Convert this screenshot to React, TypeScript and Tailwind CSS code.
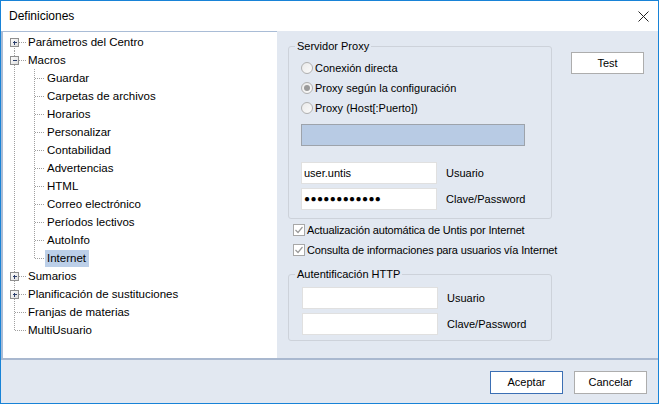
import React from 'react';

type Node = { label: string; level: 0 | 1; box?: 'plus' | 'minus'; first?: boolean; last?: boolean; lastChild?: boolean; selected?: boolean };

const nodes: Node[] = [
  { label: 'Parámetros del Centro', level: 0, box: 'plus', first: true },
  { label: 'Macros', level: 0, box: 'minus' },
  { label: 'Guardar', level: 1 },
  { label: 'Carpetas de archivos', level: 1 },
  { label: 'Horarios', level: 1 },
  { label: 'Personalizar', level: 1 },
  { label: 'Contabilidad', level: 1 },
  { label: 'Advertencias', level: 1 },
  { label: 'HTML', level: 1 },
  { label: 'Correo electrónico', level: 1 },
  { label: 'Períodos lectivos', level: 1 },
  { label: 'AutoInfo', level: 1 },
  { label: 'Internet', level: 1, lastChild: true, selected: true },
  { label: 'Sumarios', level: 0, box: 'plus' },
  { label: 'Planificación de sustituciones', level: 0, box: 'plus' },
  { label: 'Franjas de materias', level: 0 },
  { label: 'MultiUsuario', level: 0, last: true },
];

const dot = { stroke: '#a0a0a0', strokeDasharray: '1 1', shapeRendering: 'crispEdges' as const };

function TreeLines({ node }: { node: Node }) {
  const w = node.level === 0 ? 23 : 42;
  return (
    <svg width={w} height={18} className="shrink-0">
      {/* tronco principal */}
      <line x1={11.5} x2={11.5} y1={node.first ? 9 : 0} y2={node.last ? 9 : 18} {...dot} />
      {node.level === 0 && <line x1={12} x2={23} y1={9.5} y2={9.5} {...dot} />}
      {node.level === 1 && (
        <>
          <line x1={31.5} x2={31.5} y1={0} y2={node.lastChild ? 10 : 18} {...dot} />
          <line x1={32} x2={42} y1={9.5} y2={9.5} {...dot} />
        </>
      )}
      {node.box && (
        <>
          <defs>
            <linearGradient id="bx" x1="0" y1="0" x2="1" y2="1">
              <stop offset="0" stopColor="#ffffff" />
              <stop offset="1" stopColor="#dcdcdc" />
            </linearGradient>
          </defs>
          <rect x={7.5} y={5.5} width={8} height={8} fill="url(#bx)" stroke="#8f8f8f" shapeRendering="crispEdges" />
          <line x1={9.5} x2={14} y1={9.5} y2={9.5} stroke="#2c3f6b" shapeRendering="crispEdges" />
          {node.box === 'plus' && <line x1={11.5} x2={11.5} y1={7.5} y2={12} stroke="#2c3f6b" shapeRendering="crispEdges" />}
        </>
      )}
    </svg>
  );
}

function Radio({ checked }: { checked?: boolean }) {
  return (
    <span className="w-[12px] h-[12px] rounded-full border border-[#b0b0b0] bg-gradient-to-br from-[#eaeaea] to-[#fbfbfb] flex items-center justify-center shrink-0">
      {checked && <span className="w-[6px] h-[6px] rounded-full bg-[#9a9a9a]" />}
    </span>
  );
}

function Check() {
  return (
    <span className="w-[12px] h-[12px] border border-[#a8a8a8] bg-white flex items-center justify-center shrink-0">
      <svg width="8" height="8" viewBox="0 0 8 8">
        <path d="M0.5 4 L3 6.5 L7.5 1" fill="none" stroke="#9a9a9a" strokeWidth="1.2" />
      </svg>
    </span>
  );
}

function Field({ value, children, password }: { value?: string; children: string; password?: boolean }) {
  return (
    <div className="flex items-center gap-[9px]">
      <div className="w-[136px] h-[22px] bg-white border border-[#e0e0e0] flex items-center px-[2px]">
        {password ? (
          <span className="text-[10px] tracking-[0.4px] leading-none">{'●●●●●●●●●●●●'}</span>
        ) : (
          <span>{value}</span>
        )}
      </div>
      <span>{children}</span>
    </div>
  );
}

export default function App() {
  return (
    <div className="w-[659px] h-[404px] border border-[#1883d7] flex flex-col text-black" style={{ fontFamily: '"Liberation Sans", Arial, sans-serif' }}>
      {/* Title bar */}
      <div className="h-[30px] bg-white flex items-center justify-between pl-[8px] pr-[9px] shrink-0">
        <span className="text-[12px]">Definiciones</span>
        <svg width="11" height="11" viewBox="0 0 11 11">
          <path d="M0.5 0.5 L10.5 10.5 M10.5 0.5 L0.5 10.5" stroke="#222" strokeWidth="1" />
        </svg>
      </div>

      <div className="flex-1 bg-[#e2e8f1] flex flex-col">
        <div className="flex h-[327px]">
          {/* Tree */}
          <div className="w-[276px] bg-white border-l-2 border-t border-[#a9bcd6] pt-[1px] text-[11.5px]">
            {nodes.map((n) => (
              <div key={n.label} className="flex items-center h-[18px]">
                <TreeLines node={n} />
                <span className={`pl-[2px] pr-[3px] leading-[17px] h-[17px] ${n.selected ? 'bg-[#bccfe8]' : ''}`}>{n.label}</span>
              </div>
            ))}
          </div>

          {/* Right panel */}
          <div className="flex-1 flex text-[11px] pl-[11px]">
            <div className="w-[264px] flex flex-col pt-[9px]">
              <fieldset className="border border-[#cdd2da] rounded-[3px] px-0 pb-[8px]">
                <legend className="ml-[6px] px-[2px] leading-[13px]">Servidor Proxy</legend>
                <div className="pl-[12px] pt-[5px]">
                  <label className="flex items-center gap-[2px] h-[20px]"><Radio /> Conexión directa</label>
                  <label className="flex items-center gap-[2px] h-[20px]"><Radio checked /> Proxy según la configuración</label>
                  <label className="flex items-center gap-[2px] h-[20px]"><Radio /> Proxy (Host[:Puerto])</label>
                  <div className="mt-[6px] w-[224px] h-[22px] bg-[#b8cbe4] border border-[#9da3ab]" />
                  <div className="mt-[16px] flex flex-col gap-[4px]">
                    <Field value="user.untis">Usuario</Field>
                    <Field password>Clave/Password</Field>
                  </div>
                </div>
              </fieldset>

              <div className="mt-[1px] pl-[5px] whitespace-nowrap tracking-[-0.15px]">
                <label className="flex items-center gap-[2px] h-[20px]"><Check /> Actualización automática de Untis por Internet</label>
                <label className="flex items-center gap-[2px] h-[20px]"><Check /> Consulta de informaciones para usuarios vía Internet</label>
              </div>

              <fieldset className="mt-[8px] border border-[#cdd2da] rounded-[3px] px-0 pb-[5px]">
                <legend className="ml-[6px] px-[2px] leading-[13px]">Autentificación HTTP</legend>
                <div className="pl-[13px] pt-[6px] flex flex-col gap-[4px]">
                  <Field>Usuario</Field>
                  <Field>Clave/Password</Field>
                </div>
              </fieldset>
            </div>

            <div className="pl-[19px] pt-[21px]">
              <button className="w-[73px] h-[22px] bg-white border border-[#adadad]">Test</button>
            </div>
          </div>
        </div>

        <div className="h-[2px] bg-[#a9b8cf]" />

        <div className="flex justify-end gap-[11px] pt-[11px] pr-[11px] text-[11px]">
          <button className="w-[73px] h-[23px] bg-white border border-[#3b6fb4]">Aceptar</button>
          <button className="w-[73px] h-[23px] bg-white border border-[#adadad]">Cancelar</button>
        </div>
      </div>
    </div>
  );
}
